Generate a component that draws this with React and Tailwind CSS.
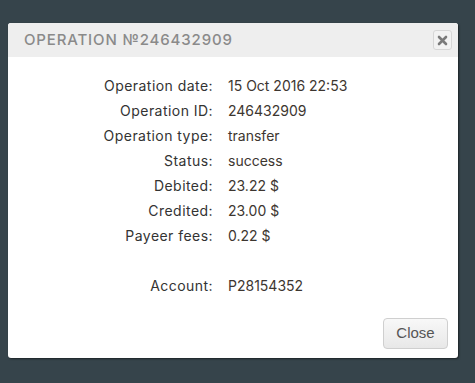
const rows = [
  ["Operation date:", "15 Oct 2016 22:53"],
  ["Operation ID:", "246432909"],
  ["Operation type:", "transfer"],
  ["Status:", "success"],
  ["Debited:", "23.22 $"],
  ["Credited:", "23.00 $"],
  ["Payeer fees:", "0.22 $"],
  ["", ""],
  ["Account:", "P28154352"],
];

export default function App() {
  return (
    <div className="min-h-screen w-full bg-[#36444b] pt-[23px] pl-[8px] font-['Inter',sans-serif]">
      <div className="w-[450px] h-[335px] bg-white rounded-[3px] shadow-[1px_1px_2px_rgba(0,0,0,0.5)] flex flex-col overflow-hidden">
        {/* header */}
        <div className="h-[34px] bg-[#eeeeee] flex items-center justify-between pl-[16px] pr-[6px]">
          <h3 className="text-[15px] tracking-[0.85px] text-[#8a8a8a] font-medium uppercase">
            Operation №246432909
          </h3>
          <button className="w-[19px] h-[20px] border border-[#d6d6d6] rounded-[3px] flex items-center justify-center bg-[#f2f2f2]">
            <svg width="11" height="11" viewBox="0 0 11 11">
              <path d="M2 2 L9 9 M9 2 L2 9" stroke="#7a7a7a" strokeWidth="2.6" strokeLinecap="round" />
            </svg>
          </button>
        </div>

        {/* body */}
        <div className="pt-[16px] flex-1">
          {rows.map(([label, value], i) => (
            <div key={i} className="flex h-[25px] items-center text-[14px]">
              <span className="w-[205px] text-right text-[#333] tracking-[0.45px]">{label}</span>
              <span className="ml-[15px] text-[#3d3630]">{value}</span>
            </div>
          ))}
        </div>

        {/* footer */}
        <div className="flex justify-end pr-[10px] pb-[9px]">
          <button className="w-[65px] h-[31px] rounded-[4px] border border-[#cfcfcf] bg-gradient-to-b from-[#f8f8f8] to-[#e8e8e8] text-[15px] text-[#555] font-['Liberation_Sans',sans-serif]">
            Close
          </button>
        </div>
      </div>
    </div>
  );
}
